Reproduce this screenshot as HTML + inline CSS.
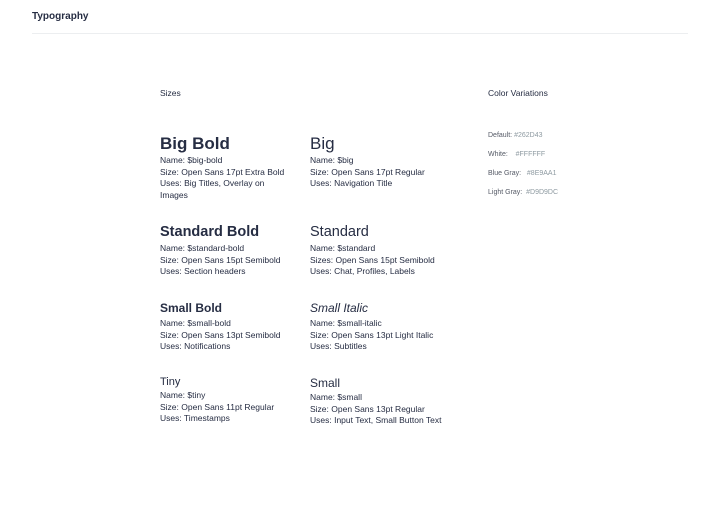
<!DOCTYPE html>
<html><head><style>
body{margin:0;width:720px;height:512px;background:#fff;font-family:"Liberation Sans",sans-serif;color:#262D43;position:relative;overflow:hidden}
.a{position:absolute;white-space:nowrap}
.t{font-size:8.5px;line-height:11.7px}
.h{line-height:1}
.c{font-size:7px;color:#555a66}
.c span{color:#8E9AA1}
</style></head><body>
<div class="a" style="left:32px;top:11px;font-size:10px;font-weight:bold">Typography</div>
<div class="a" style="left:32px;top:33px;width:656px;height:1px;background:#eceef0"></div>
<div class="a" style="left:160px;top:88px;font-size:8.5px">Sizes</div>
<div class="a" style="left:488px;top:88px;font-size:8.5px">Color Variations</div>

<div class="a h" style="left:160px;top:135px;font-size:17px;font-weight:900">Big Bold</div>
<div class="a t" style="left:160px;top:155px">Name: $big-bold<br>Size: Open Sans 17pt Extra Bold<br>Uses: Big Titles, Overlay on<br>Images</div>
<div class="a h" style="left:310px;top:135px;font-size:17px">Big</div>
<div class="a t" style="left:310px;top:155px">Name: $big<br>Size: Open Sans 17pt Regular<br>Uses: Navigation Title</div>

<div class="a h" style="left:160px;top:225px;font-size:14.5px;font-weight:bold">Standard Bold</div>
<div class="a t" style="left:160px;top:243px">Name: $standard-bold<br>Size: Open Sans 15pt Semibold<br>Uses: Section headers</div>
<div class="a h" style="left:310px;top:225px;font-size:14.5px">Standard</div>
<div class="a t" style="left:310px;top:243px">Name: $standard<br>Sizes: Open Sans 15pt Semibold<br>Uses: Chat, Profiles, Labels</div>

<div class="a h" style="left:160px;top:302px;font-size:12px;font-weight:bold">Small Bold</div>
<div class="a t" style="left:160px;top:318px">Name: $small-bold<br>Size: Open Sans 13pt Semibold<br>Uses: Notifications</div>
<div class="a h" style="left:310px;top:302px;font-size:12px;font-style:italic">Small Italic</div>
<div class="a t" style="left:310px;top:318px">Name: $small-italic<br>Size: Open Sans 13pt Light Italic<br>Uses: Subtitles</div>

<div class="a h" style="left:160px;top:377px;font-size:11px">Tiny</div>
<div class="a t" style="left:160px;top:390px">Name: $tiny<br>Size: Open Sans 11pt Regular<br>Uses: Timestamps</div>
<div class="a h" style="left:310px;top:377px;font-size:12px">Small</div>
<div class="a t" style="left:310px;top:392px">Name: $small<br>Size: Open Sans 13pt Regular<br>Uses: Input Text, Small Button Text</div>

<div class="a c" style="left:488px;top:132px">Default: <span>#262D43</span></div>
<div class="a c" style="left:488px;top:151px">White: &nbsp;&nbsp;&nbsp;<span>#FFFFFF</span></div>
<div class="a c" style="left:488px;top:170px">Blue Gray: &nbsp;&nbsp;<span>#8E9AA1</span></div>
<div class="a c" style="left:488px;top:189px">Light Gray: &nbsp;<span>#D9D9DC</span></div>
</body></html>
